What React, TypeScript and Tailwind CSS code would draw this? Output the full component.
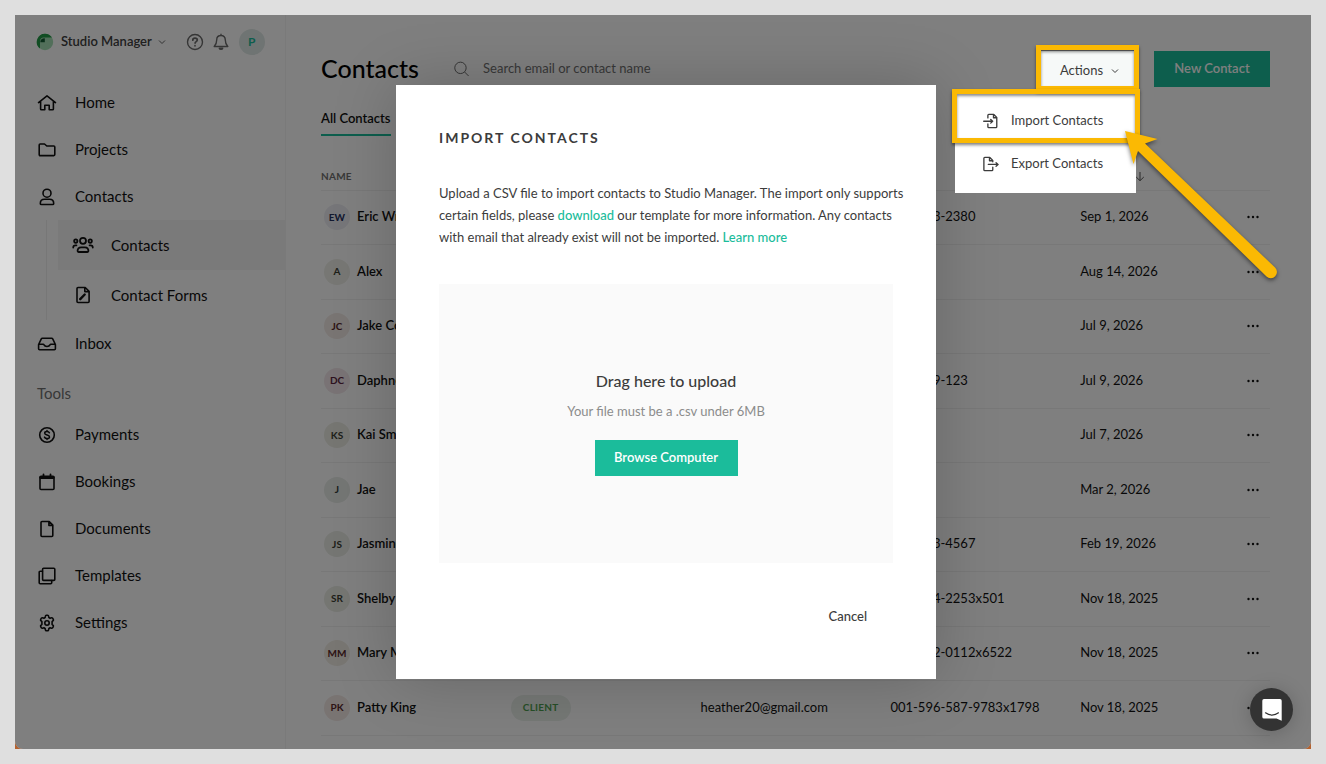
import React from 'react';

type IconProps = { children: React.ReactNode; className?: string };

function Icon({ children, className = 'size-[18px]' }: IconProps) {
  return (
    <svg
      viewBox="0 0 18 18"
      fill="none"
      stroke="currentColor"
      strokeWidth="1.6"
      strokeLinecap="round"
      strokeLinejoin="round"
      aria-hidden="true"
      className={`shrink-0 overflow-visible ${className}`}
    >
      {children}
    </svg>
  );
}

const ICONS = {
  home: (
    <Icon>
      <path d="M.5 8.6 9 1.900l8.500 6.700M2.600 7.500v7.400c0 .6.3.9.9.9h3.300v-4.600h4.400v4.600h3.300c.6 0 .9-.3.9-.9V7.500" />
    </Icon>
  ),
  folder: (
    <Icon>
      <path d="M1.200 4c0-.6.4-1 1-1h4.300l2.300 2h7c.6 0 1 .4 1 1v7.600c0 .6-.4 1-1 1H2.200c-.6 0-1-.4-1-1z" />
    </Icon>
  ),
  person: (
    <Icon>
      <circle cx="9" cy="5.2" r="4" />
      <path d="M3.400 16.500c-.7 0-1.100-.4-1.100-1.100 0-2.600 1.700-4.200 4.200-4.200h5c2.500 0 4.200 1.600 4.200 4.200 0 .7-.4 1.100-1.100 1.100z" />
    </Icon>
  ),
  people: (
    <Icon className="size-5">
      <circle cx="9" cy="5.2" r="2.7" />
      <path d="M5 15.300c-.6 0-.9-.3-.9-.8 0-2.100 1.300-3.400 3.200-3.400h3.400c1.900 0 3.200 1.300 3.200 3.400 0 .5-.3.8-.9.8z" />
      <circle cx="2.5" cy="5.5" r="1.5" />
      <circle cx="15.5" cy="5.5" r="1.5" />
      <path d="M.2 11.300c0-1.300.8-2 2-2h.9M17.800 11.300c0-1.300-.8-2-2-2h-.9" />
    </Icon>
  ),
  form: (
    <Icon>
      <path d="M4 1.500h7.200l3.900 3.800v10.200c0 .6-.4 1-1 1H4c-.6 0-1-.4-1-1v-13c0-.6.4-1 1-1zM10.800 1.700v3.900h4" />
      <path d="m6.200 13.200 4.500-4.700" strokeWidth="2.4" />
    </Icon>
  ),
  inbox: (
    <Icon>
      <path d="M.6 9.500 3.300 3.900c.2-.4.5-.6 1-.6h9.400c.5 0 .8.2 1 .6l2.700 5.600v4.200c0 .6-.4 1-1 1H1.600c-.6 0-1-.4-1-1zM.8 9.300h4.400c.4 0 .6.2.8.6.5 1.100 1.500 1.600 3 1.600s2.500-.5 3-1.600c.2-.4.4-.6.8-.6h4.400" />
    </Icon>
  ),
  dollar: (
    <Icon>
      <circle cx="9" cy="9" r="7.3" />
      <path d="M11.400 6.800c-.4-.8-1.200-1.200-2.400-1.200-1.400 0-2.300.6-2.300 1.600 0 2.500 4.800 1.200 4.800 3.700 0 1-1 1.600-2.400 1.600-1.300 0-2.200-.5-2.600-1.400M9 4.400v1M9 12.600v1" strokeWidth="1.5" />
    </Icon>
  ),
  calendar: (
    <Icon>
      <path d="M3 3.200h12c.6 0 1 .4 1 1v11.300c0 .6-.4 1-1 1H3c-.6 0-1-.4-1-1V4.200c0-.6.4-1 1-1z" />
      <path d="M2.600 4.600h12.800" strokeWidth="2.6" />
      <path d="M5.500 1.400v2M12.500 1.400v2" strokeWidth="1.8" />
    </Icon>
  ),
  document: (
    <Icon>
      <path d="M4 1.500h7.200l3.600 3.600v10.400c0 .6-.4 1-1 1H4c-.6 0-1-.4-1-1v-13c0-.6.4-1 1-1zM10.900 1.700v3.700h3.700" />
    </Icon>
  ),
  templates: (
    <Icon>
      <rect x="4.6" y="1.2" width="12.2" height="12.2" rx="1" />
      <path d="M4.400 4.300H2.200c-.6 0-1 .4-1 1v10.500c0 .6.4 1 1 1h10.500c.6 0 1-.4 1-1v-2.200" />
    </Icon>
  ),
  gear: (
    <Icon>
      <path d="M7.400 2.200c.1-.6.4-.9.9-.9h1.400c.5 0 .8.3.9.9l.3 1.300 1.200.7 1.300-.4c.5-.2.9 0 1.200.4l.7 1.200c.3.5.2.9-.2 1.300l-1 .9v2.800l1 .9c.4.4.5.8.2 1.300l-.7 1.200c-.3.4-.7.6-1.200.4l-1.300-.4-1.200.7-.3 1.300c-.1.6-.4.9-.9.9H8.300c-.5 0-.8-.3-.9-.9l-.3-1.300-1.200-.7-1.300.4c-.5.2-.9 0-1.200-.4l-.7-1.200c-.3-.5-.2-.9.2-1.300l1-.9V7.600l-1-.9c-.4-.4-.5-.8-.2-1.300l.7-1.200c.3-.4.7-.6 1.200-.4l1.300.4 1.200-.7z" />
      <circle cx="9" cy="9" r="2.2" />
    </Icon>
  ),
};

const MAIN_NAV = [
  { label: 'Home', icon: ICONS.home },
  { label: 'Projects', icon: ICONS.folder },
  { label: 'Contacts', icon: ICONS.person },
];

const SUB_NAV = [
  { label: 'Contacts', icon: ICONS.people, active: true },
  { label: 'Contact Forms', icon: ICONS.form, active: false },
];

const TOOLS_NAV = [
  { label: 'Payments', icon: ICONS.dollar },
  { label: 'Bookings', icon: ICONS.calendar },
  { label: 'Documents', icon: ICONS.document },
  { label: 'Templates', icon: ICONS.templates },
  { label: 'Settings', icon: ICONS.gear },
];

const CONTACTS = [
  { initials: 'EW', name: 'Eric Wright', avatar: 'bg-[#ecedf3] text-[#24305e]', phone: '555-123-2380', added: 'Sep 1, 2026' },
  { initials: 'A', name: 'Alex', avatar: 'bg-[#eeefe8] text-[#3c4034]', phone: '', added: 'Aug 14, 2026' },
  { initials: 'JC', name: 'Jake Cole', avatar: 'bg-[#f3eae6] text-[#5a2a2c]', phone: '', added: 'Jul 9, 2026' },
  { initials: 'DC', name: 'Daphne', avatar: 'bg-[#f2e7ea] text-[#5c2440]', phone: '555-629-123', added: 'Jul 9, 2026' },
  { initials: 'KS', name: 'Kai Smith', avatar: 'bg-[#ecede4] text-[#3c4034]', phone: '', added: 'Jul 7, 2026' },
  { initials: 'J', name: 'Jae', avatar: 'bg-[#e8ece8] text-[#34403a]', phone: '', added: 'Mar 2, 2026' },
  { initials: 'JS', name: 'Jasmine', avatar: 'bg-[#eaede6] text-[#3c4034]', phone: '555-123-4567', added: 'Feb 19, 2026' },
  { initials: 'SR', name: 'Shelby', avatar: 'bg-[#eaece5] text-[#3c4034]', phone: '206-344-2253x501', added: 'Nov 18, 2025' },
  { initials: 'MM', name: 'Mary M', avatar: 'bg-[#f1ede4] text-[#5a2a2c]', phone: '206-342-0112x6522', added: 'Nov 18, 2025' },
  { initials: 'PK', name: 'Patty King', avatar: 'bg-[#f3e8e5] text-[#5a2a2c]', type: 'CLIENT', email: 'heather20@gmail.com', phone: '001-596-587-9783x1798', added: 'Nov 18, 2025' },
];

function NavItem({ label, icon }: { label: string; icon: React.ReactNode }) {
  return (
    <a href="#" className="flex h-[47px] items-center gap-[19px] pl-[23px] text-[15px]">
      {icon}
      {label}
    </a>
  );
}

function Sidebar() {
  return (
    <aside className="w-[271px] shrink-0 border-r border-[#f5f5f5] text-[#111]">
      <div className="flex h-16 items-center pl-[21px] pb-[10px]">
        <svg viewBox="0 0 18 18" className="size-[18px]" aria-hidden="true">
          <circle cx="9" cy="9" r="8.2" fill="#a5dfb4" />
          <path d="M9 .8A8.200 8.200 0 0 0 4 15.500V8.200C4 6.200 5.400 4.600 7.500 4.600h8.500A8.200 8.200 0 0 0 9 .8z" fill="#239a46" />
          <path d="M4.300 9.200h4.500V5.200C6 5.200 4.300 6.800 4.300 9.200z" fill="#145c34" />
        </svg>
        <button type="button" className="ml-[7px] flex items-center gap-[6px] text-[13px] font-semibold text-[#404040]">
          Studio Manager
          <svg viewBox="0 0 8 8" className="size-2" fill="none" stroke="#666" aria-hidden="true">
            <path d="m1 2.500 3 3 3-3" />
          </svg>
        </button>
        <button type="button" aria-label="Help" className="ml-5">
          <svg viewBox="0 0 18 18" className="size-[18px]" fill="none" stroke="#6b6b6b" strokeWidth="1.4" strokeLinecap="round">
            <circle cx="9" cy="9" r="7.5" />
            <path d="M6.800 7.200c0-1.300.9-2 2.200-2s2.300.7 2.300 1.900c0 1.500-2.200 1.500-2.200 3M9 12.700v.1" strokeWidth="1.7" />
          </svg>
        </button>
        <button type="button" aria-label="Notifications" className="ml-2">
          <svg viewBox="0 0 18 18" className="size-[18px]" fill="none" stroke="#6b6b6b" strokeWidth="1.4" strokeLinejoin="round">
            <path d="M9 .8v1.500M9 2.500c-2.800 0-4.300 1.900-4.300 4.400 0 3.600-1 5-2.500 6.600h13.600c-1.500-1.600-2.500-3-2.500-6.600 0-2.500-1.500-4.400-4.300-4.400z" />
            <path d="M7.300 15.300c.2.800.9 1.100 1.700 1.100s1.500-.3 1.700-1.100z" fill="#6b6b6b" />
          </svg>
        </button>
        <span className="ml-[9px] flex size-[26px] items-center justify-center rounded-full bg-[#dfe8e6] text-[12px] font-bold text-[#1bbc9b]">
          P
        </span>
      </div>

      <nav aria-label="Main">
        {MAIN_NAV.map((item) => (
          <NavItem key={item.label} {...item} />
        ))}
        <div className="ml-[31px] border-l border-[#eee] pl-[11px]">
          {SUB_NAV.map((item) => (
            <a
              key={item.label}
              href="#"
              className={`flex h-[50px] items-center text-[15px] ${item.active ? 'bg-[#f4f4f4]' : ''}`}
            >
              <span className="flex w-[53px] justify-center pr-1">{item.icon}</span>
              {item.label}
            </a>
          ))}
        </div>
        <NavItem label="Inbox" icon={ICONS.inbox} />
      </nav>

      <h2 className="flex h-11 items-center pt-2 pl-[22px] text-[15px] text-[#707070]">Tools</h2>
      <nav aria-label="Tools">
        {TOOLS_NAV.map((item) => (
          <NavItem key={item.label} {...item} />
        ))}
      </nav>
    </aside>
  );
}

function ActionsMenu() {
  return (
    <div className="relative z-20 text-[#3c3c3c]">
      <button type="button" className="flex h-9 w-[97px] items-center justify-center gap-2 bg-[#f6f9f8] pt-1 pl-1 text-[13px]">
        Actions
        <svg viewBox="0 0 8 8" className="size-2" fill="none" stroke="currentColor" aria-hidden="true">
          <path d="m1 2.500 3 3 3-3" />
        </svg>
      </button>

      <div className="absolute top-[41px] right-0 w-[181px] bg-white pt-[7px] pb-2">
        <button type="button" className="flex h-[43px] w-full items-center gap-3 pl-7 text-[13px]">
          <Icon className="size-4">
            <path d="M5.500 5.500V2.600c0-.6.4-1 1-1h5.700l3.300 3.300v10.500c0 .6-.4 1-1 1h-8c-.6 0-1-.4-1-1v-3M11.800 1.800v3.500h3.500M.8 9.300h10M8.700 7.200l2.200 2.100-2.200 2.100" strokeWidth="1.5" />
          </Icon>
          Import Contacts
        </button>
        <button type="button" className="flex h-[43px] w-full items-center gap-3 pl-7 text-[13px]">
          <Icon className="size-4">
            <path d="M11 6.500V4.900L7.700 1.600H2c-.6 0-1 .4-1 1v12.800c0 .6.4 1 1 1h8c.6 0 1-.4 1-1v-2.800M7.300 1.800v3.500h3.500M6 9.500h11M14.700 7.500l2.200 2-2.200 2" strokeWidth="1.5" />
          </Icon>
          Export Contacts
        </button>
      </div>

      {/* highlight boxes and pointer */}
      <div className="pointer-events-none absolute -top-[6px] -left-[3px] h-[46px] w-[103px] border-[5px] border-[#fbb903] shadow-[0_2px_3px_rgba(0,0,0,0.5),inset_0_2px_3px_rgba(0,0,0,0.45)]" />
      <div className="pointer-events-none absolute top-[38px] -right-1 h-[54px] w-[188px] border-[5px] border-[#fbb903] shadow-[0_2px_3px_rgba(0,0,0,0.5),inset_0_2px_3px_rgba(0,0,0,0.45)]" />
      <svg
        viewBox="0 0 160 160"
        className="pointer-events-none absolute top-[79px] left-[85px] size-[160px] max-w-none drop-shadow-[0_2px_2px_rgba(0,0,0,0.5)]"
        fill="#fbb903"
        aria-hidden="true"
      >
        <path d="M1 1 33.500 9 21 13.500 151 137.500a6 6 0 0 1-8.500 9L14 21 9.500 34z" />
      </svg>
    </div>
  );
}

function ContactsTable() {
  return (
    <table className="w-full table-fixed border-collapse text-left text-[13px] text-[#111]">
      <colgroup>
        <col className="w-[20%]" />
        <col className="w-[20%]" />
        <col className="w-[20%]" />
        <col className="w-[20%]" />
        <col className="w-[17%]" />
        <col className="w-[3%]" />
      </colgroup>
      <thead>
        <tr className="h-[27px] border-b border-[#f1f1f1] text-[10px] tracking-wide text-[#707070]">
          <th className="p-0 font-bold">NAME</th>
          <th className="p-0" />
          <th className="p-0" />
          <th className="p-0" />
          <th className="p-0">
            <svg viewBox="0 0 10 12" className="ml-[55px] h-3 w-[10px]" fill="none" stroke="#555" aria-hidden="true">
              <path d="M5 2v8.500M1.200 7 5 10.700 8.800 7" />
            </svg>
          </th>
          <th className="p-0" />
        </tr>
      </thead>
      <tbody>
        {CONTACTS.map((c) => (
          <tr key={c.initials} className="border-b border-[#f1f1f1] odd:h-[54px] even:h-[55px]">
            <td className="p-0 pl-[3px]">
              <div className="flex items-center gap-[7px] font-semibold whitespace-nowrap">
                <span className={`flex size-[26px] items-center justify-center rounded-full text-[10px] font-bold ${c.avatar}`}>
                  {c.initials}
                </span>
                {c.name}
              </div>
            </td>
            <td className="p-0">
              {c.type && (
                <span className="inline-flex h-[26px] items-center rounded-full bg-[#eaf0eb] px-3 text-[10px] font-bold tracking-wide text-[#4f9f50]">
                  {c.type}
                </span>
              )}
            </td>
            <td className="p-0">{c.email}</td>
            <td className="p-0 whitespace-nowrap">{c.phone}</td>
            <td className="p-0">{c.added}</td>
            <td className="p-0">
              <button type="button" aria-label={`More options for ${c.name}`} className="mr-[11px] ml-auto block">
                <svg viewBox="0 0 12 4" className="h-1 w-3" fill="#111" aria-hidden="true">
                  <circle cx="1.5" cy="2" r="1.2" />
                  <circle cx="6" cy="2" r="1.2" />
                  <circle cx="10.5" cy="2" r="1.2" />
                </svg>
              </button>
            </td>
          </tr>
        ))}
      </tbody>
    </table>
  );
}

function ImportDialog() {
  return (
    <div
      role="dialog"
      aria-labelledby="import-title"
      className="w-[540px] bg-white px-[43px] pt-11 pb-11 text-[#3c3c3c] shadow-[0_0_60px_rgba(0,0,0,0.2)]"
    >
      <h2 id="import-title" className="text-[14px] leading-[18px] font-bold tracking-[2px]">
        IMPORT CONTACTS
      </h2>
      <p className="mt-[35px] text-[13px] leading-[22px] whitespace-nowrap">
        Upload a CSV file to import contacts to Studio Manager. The import only supports
        <br />
        certain fields, please{' '}
        <a href="#" className="font-medium text-[#1bbc9b]">download</a>{' '}
        our template for more information. Any contacts
        <br />
        with email that already exist will not be imported.{' '}
        <a href="#" className="font-medium text-[#1bbc9b]">Learn more</a>
      </p>
      <div className="mt-9 flex h-[279px] flex-col items-center bg-[#fafafa] pt-[86px]">
        <p className="text-[16px] leading-[22px] font-medium">Drag here to upload</p>
        <p className="mt-2 text-[13px] leading-[22px] text-[#8c8c8c]">Your file must be a .csv under 6MB</p>
        <button type="button" className="mt-[18px] h-9 w-[143px] bg-[#1bbc9b] text-[13px] font-semibold text-white">
          Browse Computer
        </button>
      </div>
      <div className="mt-9 flex justify-end pr-[26px]">
        <button type="button" className="h-9 text-[13px] font-medium">Cancel</button>
      </div>
    </div>
  );
}

export default function App() {
  return (
    <div className="min-h-screen bg-[#dfdfdf] p-[15px] font-['Lato',sans-serif]">
      <div className="bg-[#b4622f]">
        <div className="relative flex min-h-[calc(100vh-30px)] overflow-hidden rounded-b-lg bg-white">
          <Sidebar />
          <main className="min-w-0 flex-1 pt-9 pr-[41px] pb-3 pl-[35px]">
            <header className="flex h-9 items-center">
              <h1 className="text-[25px] font-medium text-black">Contacts</h1>
              <label className="ml-[35px] flex flex-1 items-center gap-[14px]">
                <svg viewBox="0 0 16 16" className="size-4" fill="none" stroke="#666" aria-hidden="true">
                  <circle cx="6.8" cy="6.8" r="6" />
                  <path d="m11.200 11.200 4.200 4.200" />
                </svg>
                <input
                  type="text"
                  aria-label="Search contacts"
                  placeholder="Search email or contact name"
                  className="w-full bg-transparent text-[13px] placeholder-[#707070] outline-none"
                />
              </label>
              <ActionsMenu />
              <button type="button" className="ml-[18px] h-9 w-[116px] bg-[#1bbc9b] text-[13px] font-semibold text-white">
                New Contact
              </button>
            </header>
            <div className="mt-5 flex">
              <button type="button" className="h-[29px] border-b-2 border-[#1bbc9b] pb-1 text-[13px] font-semibold text-[#111]">
                All Contacts
              </button>
            </div>
            <div className="mt-[27px]">
              <ContactsTable />
            </div>
          </main>

          <div className="absolute inset-0 z-10 bg-black/50" />
          <div className="pointer-events-none absolute inset-0 z-10 flex items-center justify-center pl-[6px]">
            <ImportDialog />
          </div>
          <button
            type="button"
            aria-label="Open chat"
            className="absolute right-[18px] bottom-[18px] z-20 flex size-[43px] items-center justify-center rounded-full bg-[#333] shadow-[0_2px_20px_rgba(0,0,0,0.2)]"
          >
            <svg viewBox="0 0 20 22" className="h-[22px] w-5" aria-hidden="true">
              <path d="M2 0h16a1.700 1.700 0 0 1 1.700 1.700V21.700L14.500 19.600H2A1.700 1.700 0 0 1 .3 18V1.700A1.700 1.700 0 0 1 2 0z" fill="#fff" />
              <path d="M3.500 13.800c3.800 3 9.200 3 13 0" fill="none" stroke="#333" strokeWidth="1.2" strokeLinecap="round" />
            </svg>
          </button>
        </div>
      </div>
    </div>
  );
}
